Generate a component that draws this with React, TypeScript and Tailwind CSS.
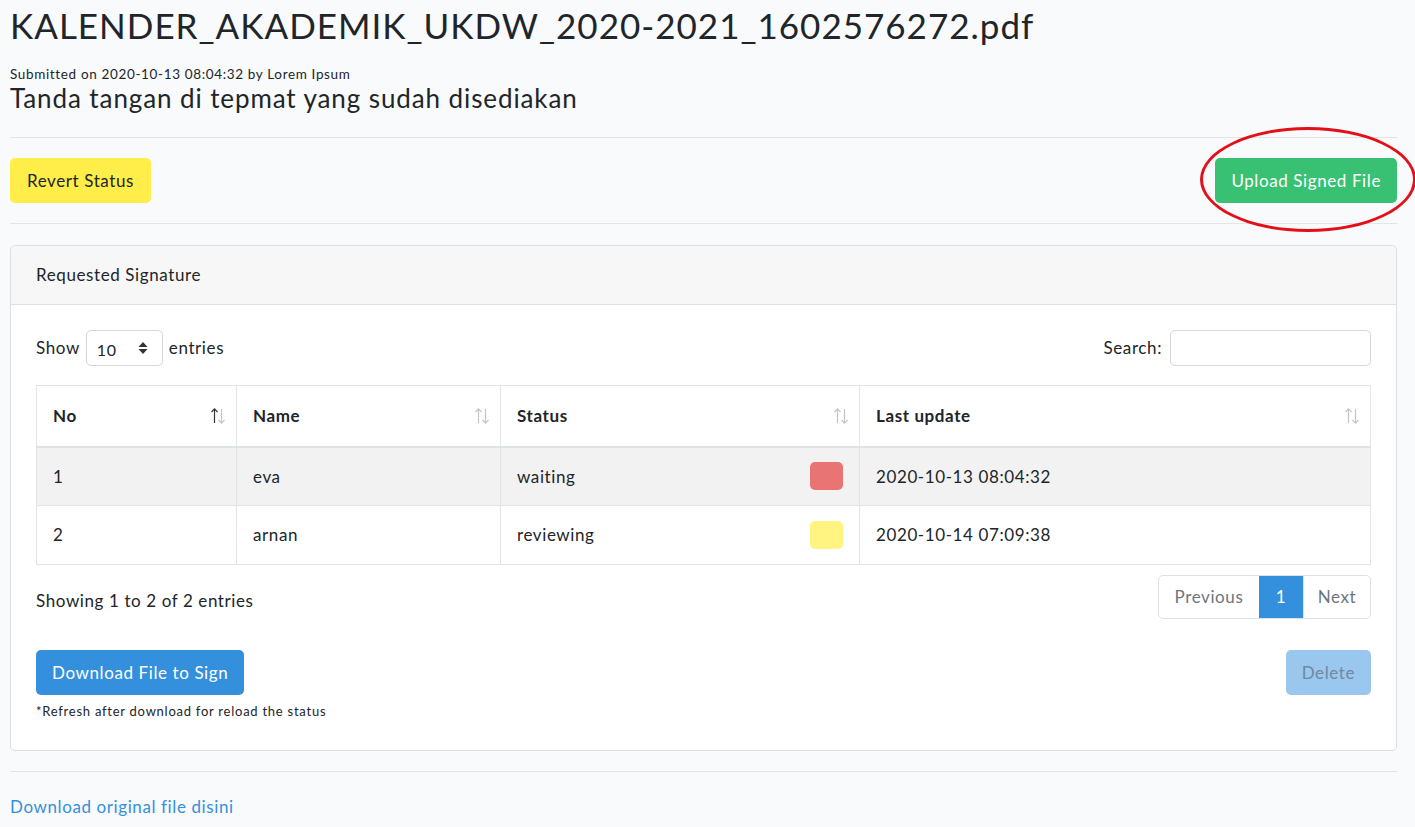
import React from 'react'

const rows = [
  { no: 1, name: 'eva', status: 'waiting', color: 'bg-[#e87573]', updated: '2020-10-13 08:04:32' },
  { no: 2, name: 'arnan', status: 'reviewing', color: 'bg-[#fff382]', updated: '2020-10-14 07:09:38' },
]

function SortIcon({ active }: { active?: boolean }) {
  return (
    <svg className="absolute right-[10px] top-1/2 -translate-y-1/2" width="16" height="18" viewBox="0 0 16 18" fill="none" strokeWidth="1.2">
      <g stroke={active ? '#333' : '#c4c4c4'}>
        <path d="M4.5 16 V2" />
        <path d="M1.5 5 L4.5 1.8 L7.5 5" />
      </g>
      <g stroke="#c4c4c4">
        <path d="M11.5 2 V16" />
        <path d="M8.5 13 L11.5 16.2 L14.5 13" />
      </g>
    </svg>
  )
}

export default function App() {
  return (
    <div className="min-h-screen bg-[#f8fafc] text-[#212529] font-['Lato','Noto_Sans',sans-serif] tracking-[0.6px]">
      <div className="pl-[10px] pr-[18px]">
        <h1 className="pt-[4px] text-[35px] leading-[42px] tracking-[1px]">
          KALENDER_AKADEMIK_UKDW_2020-2021_1602576272.pdf
        </h1>
        <p className="mt-[20px] text-[13.5px] leading-[16px] tracking-[0.65px]">Submitted on 2020-10-13 08:04:32 by Lorem Ipsum</p>
        <h3 className="mt-[1px] text-[26px] leading-[30px] tracking-[0.9px]">Tanda tangan di tepmat yang sudah disediakan</h3>

        <hr className="mt-[24px] border-t border-[#e2e4e6]" />

        <div className="flex items-center justify-between py-[20px]">
          <button className="h-[45px] rounded-[5px] bg-[#ffed4a] px-[17px] text-[17px] text-[#212529]">
            Revert Status
          </button>
          <div className="relative">
            <button className="h-[45px] rounded-[5px] bg-[#38c172] px-[16px] text-[17px] text-white">
              Upload Signed File
            </button>
            <div className="pointer-events-none absolute left-[-15px] top-[-31px] h-[105px] w-[216px] rounded-[50%] border-[3px] border-[#e3101a]" />
          </div>
        </div>

        <hr className="border-t border-[#e2e4e6]" />

        <div className="mt-[21px] rounded-[5px] border border-[#dfdfdf] bg-white">
          <div className="flex h-[59px] items-center rounded-t-[5px] border-b border-[#dfdfdf] bg-[#f7f7f7] px-[25px] text-[17px]">
            Requested Signature
          </div>
          <div className="px-[25px] pb-[30px] pt-[25px]">
            <div className="flex items-center justify-between">
              <div className="flex items-center gap-[6px] text-[17px]">
                <span>Show</span>
                <div className="flex h-[36px] w-[77px] items-center justify-between rounded-[5px] border border-[#d6d6d6] bg-white pl-[10px] pr-[14px] text-[16px]">
                  <span className="pt-[4px]">10</span>
                  <svg width="10" height="14" viewBox="0 0 10 14">
                    <path d="M5 1 L9.5 6 H0.5 Z" fill="#333" />
                    <path d="M5 13 L9.5 8 H0.5 Z" fill="#333" />
                  </svg>
                </div>
                <span>entries</span>
              </div>
              <div className="flex items-center gap-[8px] text-[17px]">
                <span>Search:</span>
                <div className="h-[36px] w-[201px] rounded-[5px] border border-[#d6d6d6] bg-white" />
              </div>
            </div>

            <table className="mt-[19px] w-full border-collapse text-[17px]">
              <thead>
                <tr className="h-[61px] text-left font-bold">
                  <th className="relative w-[200px] border border-[#e2e4e6] border-b-2 border-b-[#dee2e6] px-[16px]">
                    No
                    <SortIcon active />
                  </th>
                  <th className="relative w-[264px] border border-[#e2e4e6] border-b-2 border-b-[#dee2e6] px-[16px]">
                    Name
                    <SortIcon />
                  </th>
                  <th className="relative w-[359px] border border-[#e2e4e6] border-b-2 border-b-[#dee2e6] px-[16px]">
                    Status
                    <SortIcon />
                  </th>
                  <th className="relative border border-[#e2e4e6] border-b-2 border-b-[#dee2e6] px-[16px]">
                    Last update
                    <SortIcon />
                  </th>
                </tr>
              </thead>
              <tbody>
                {rows.map((r, i) => (
                  <tr key={r.no} className={`h-[59px] ${i % 2 === 0 ? 'bg-[#f2f2f2]' : 'bg-white'}`}>
                    <td className="border border-[#e2e4e6] px-[16px]">{r.no}</td>
                    <td className="border border-[#e2e4e6] px-[16px]">{r.name}</td>
                    <td className="border border-[#e2e4e6] px-[16px]">
                      <div className="flex items-center justify-between">
                        <span>{r.status}</span>
                        <span className={`h-[28px] w-[33px] rounded-[5px] ${r.color}`} />
                      </div>
                    </td>
                    <td className="border border-[#e2e4e6] px-[16px]">{r.updated}</td>
                  </tr>
                ))}
              </tbody>
            </table>

            <div className="mt-[10px] flex items-center justify-between">
              <span className="pt-[8px] text-[17px]">Showing 1 to 2 of 2 entries</span>
              <div className="flex h-[44px] overflow-hidden rounded-[5px] border border-[#dee2e6] text-[17px]">
                <span className="flex w-[100px] items-center justify-center text-[#6c757d]">Previous</span>
                <span className="flex w-[44px] items-center justify-center bg-[#3490dc] text-white">1</span>
                <span className="flex w-[67px] items-center justify-center border-l border-[#dee2e6] text-[#6c757d]">Next</span>
              </div>
            </div>

            <div className="mt-[31px] flex items-start justify-between">
              <div>
                <button className="h-[45px] rounded-[5px] bg-[#3490dc] px-[16px] text-[17px] text-white">
                  Download File to Sign
                </button>
                <p className="mt-[7px] text-[13px] leading-[18px] tracking-[0.75px]">*Refresh after download for reload the status</p>
              </div>
              <button className="h-[45px] rounded-[5px] bg-[#9ac7ee] px-[16px] text-[17px] text-[#7088a0]">
                Delete
              </button>
            </div>
          </div>
        </div>

        <hr className="mt-[20px] border-t border-[#e2e4e6]" />

        <a className="mt-[22px] inline-block pb-[10px] text-[17px] text-[#3490dc]">Download original file disini</a>
      </div>
    </div>
  )
}
